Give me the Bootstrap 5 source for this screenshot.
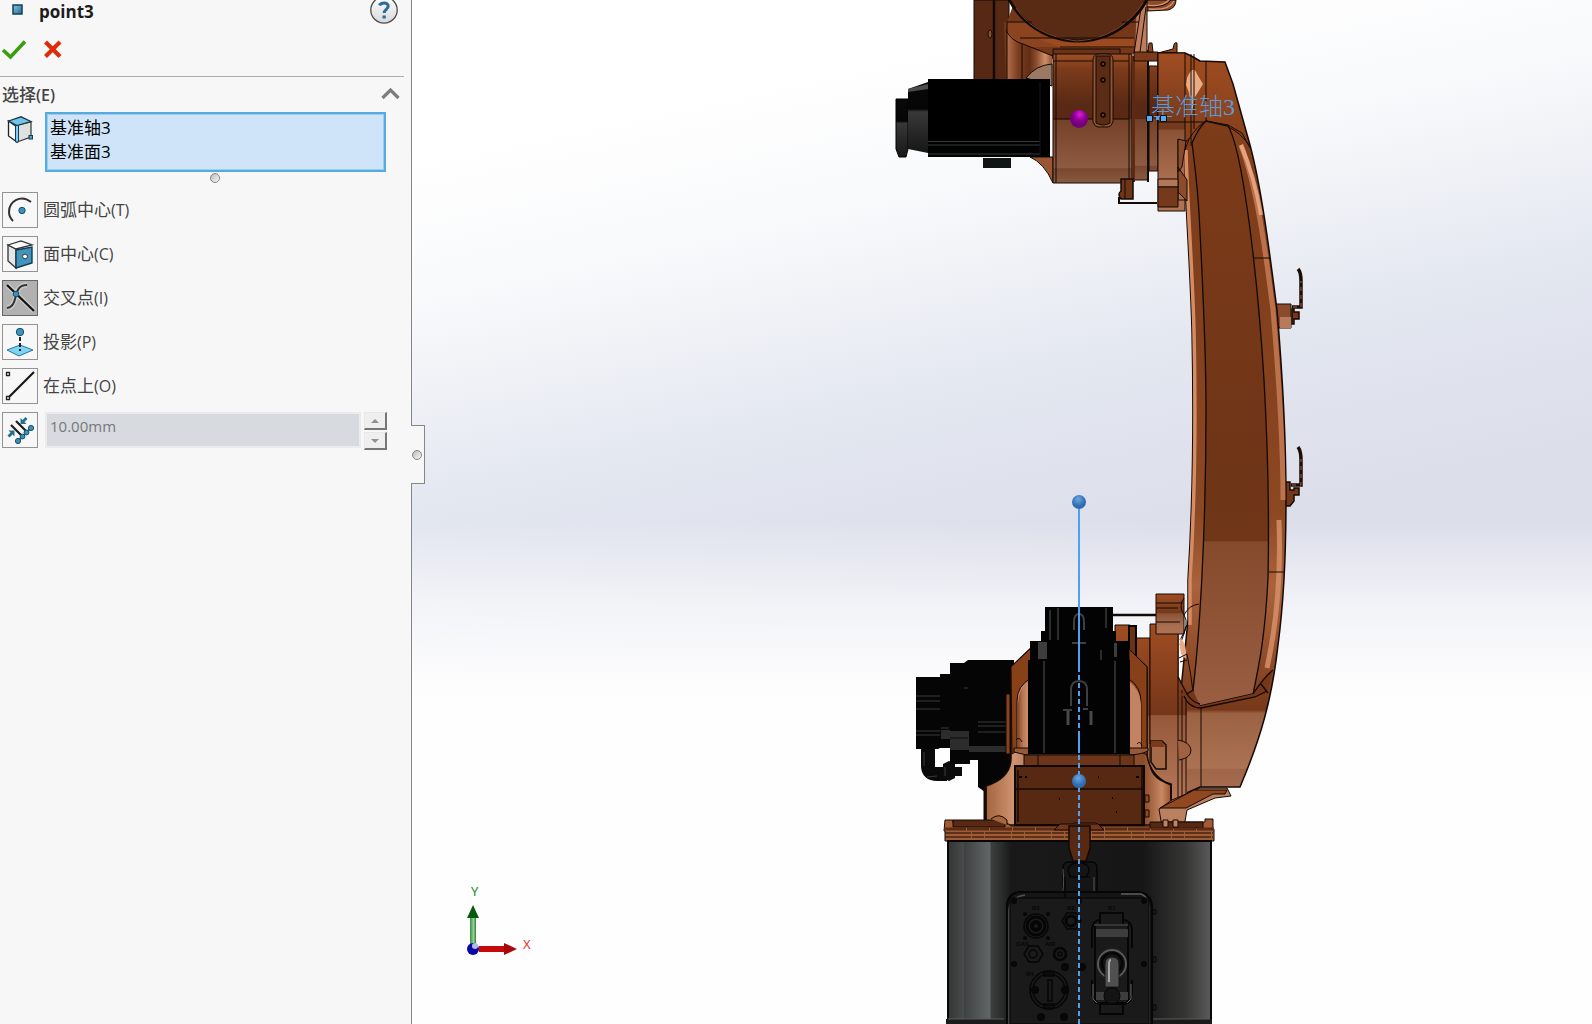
<!DOCTYPE html>
<html lang="zh-CN">
<head>
<meta charset="utf-8">
<meta name="viewport" content="width=device-width, initial-scale=1">
<title>point3</title>
<link href="https://cdn.jsdelivr.net/npm/bootstrap@5.3.0/dist/css/bootstrap.min.css" rel="stylesheet">
<style>
body{font-family:"Open Sans","Noto Sans CJK SC",sans-serif;font-size:17px;line-height:24px;color:#444}
.property-panel{width:412px;background:#f7f7f7;border-right:1px solid #868686}
.panel-head{height:30px;padding-left:12px;padding-right:13px}
.panel-title{font-size:17px;line-height:24px;font-weight:700;color:#1c1c1c}
.help-btn{margin-top:-5px}
.bare-btn{line-height:0}
.panel-actions{height:46px;gap:17px;padding-left:1px;padding-top:8px}
.panel-rule{height:1px;background:#acaeac;margin-right:7px}
.section-title{font-size:17px;line-height:24px;font-weight:500}
.latin{font-size:16px}
.section-title .latin{font-weight:600}
.section-head{padding:6px 11px 4px 2px;height:35px}
.pick-row{padding-left:7px;padding-right:25px;gap:12px}
.pick-list{height:60px;border:2px solid #55abe0;box-shadow:inset 0 0 0 1px #9fcdf0;background:#cfe4f8;color:#000;padding:0 3px;overflow:hidden;outline:0;font-size:17px}
.pick-list option{height:24px;line-height:24px;padding:0;min-height:24px}
.grip{width:10px;height:10px;border-radius:50%;border:1px solid #858585;background:linear-gradient(135deg,#b8b8b8,#fafafa)}
.list-grip{padding-left:19px;height:20px;padding-top:1px}
.options{padding-left:2px;gap:8px}
.option-label{gap:5px;cursor:pointer}
.icon-box{width:36px;height:36px;border:1px solid #939393;background:#f7f7f7}
.btn-check:checked+.option-label .icon-box{background:#b1b1b1;border-color:#666}
.dist-row{gap:7px;padding-right:24px}
.dist-input{height:36px;border:2px solid #ebebeb;background:#d7dbe0;color:#777;font-size:15px;line-height:20px;padding:0 0 8px 3px}
.spin{gap:2px;width:23px;margin-left:-4px}
.spin-btn{height:18px;border:1px solid #e8e8e8;border-right:2px solid #777;border-bottom:2px solid #777;background:#efefef;line-height:0}
.pane-handle{left:411px;top:425px;width:14px;height:59px;background:#f7f7f7;border:1px solid #868686;border-left:0;padding:0 2px 0 0;z-index:2}
.graphics{background:linear-gradient(to bottom,rgba(255,255,255,0) 51%,rgba(255,255,255,.62) 59%,rgba(254,254,254,1) 68%),linear-gradient(168deg,#fff 12%,#f8f9fb 24%,#e3e7f0 40%,#dcdeea 55%)}
.edge{fill:none;stroke:#140a05}
.dim{fill:none;stroke:#060606}
.sheen{fill:none;stroke:#383a3a}
.pl{font-family:"Liberation Sans",sans-serif;font-size:6px;font-weight:700;fill:#060606}
.axis-tag{font-family:"Liberation Serif","Noto Sans CJK SC",serif;font-size:24px;font-weight:300;fill:#5b9bdc}
.triad-tag{font-family:"Noto Sans","Open Sans",sans-serif;font-size:13px}
</style>
</head>
<body>
<div class="d-flex vh-100 overflow-hidden position-relative">
<aside class="property-panel flex-shrink-0">
  <header class="panel-head d-flex align-items-start">
    <svg width="11" height="11" class="mt-1" aria-hidden="true"><defs><linearGradient id="sq" x2="1" y2="1"><stop stop-color="#8cc6e2"/><stop offset="1" stop-color="#1f6b90"/></linearGradient></defs><rect x="1" y="1" width="9" height="9" fill="url(#sq)" stroke="#123f56" stroke-width="1.5"/></svg>
    <h1 class="panel-title mb-0 ms-3">point3</h1>
    <button type="button" class="btn p-0 border-0 bare-btn help-btn ms-auto" aria-label="帮助">
      <svg width="28" height="30" viewBox="0 0 28 30"><defs><linearGradient id="hp" x2="0" y2="1"><stop stop-color="#fff"/><stop offset="1" stop-color="#d8d8d8"/></linearGradient></defs><circle cx="14" cy="15" r="13.2" fill="url(#hp)" stroke="#4c4c4c" stroke-width="1.3"/><path d="M9.600 10.500c.8-3 8.600-4 8.600.6 0 3.200-4 3.300-4 7" fill="none" stroke="#276f96" stroke-width="3"/><rect x="12.500" y="20.500" width="3.300" height="3" fill="#276f96"/></svg>
    </button>
  </header>
  <div class="panel-actions d-flex align-items-start">
    <button type="button" class="btn p-0 border-0 bare-btn" aria-label="确定"><svg width="26" height="22"><path d="M2 12l7.500 7L24 3.500" fill="none" stroke="#38a00c" stroke-width="3.600"/></svg></button>
    <button type="button" class="btn p-0 border-0 bare-btn" aria-label="取消"><svg width="18" height="22"><path d="M1.500 4L16 18.500M16 4L1.500 18.500" stroke="#df2c08" stroke-width="4.200"/></svg></button>
  </div>
  <div class="panel-rule"></div>
  <section>
    <div class="section-head d-flex align-items-start justify-content-between">
      <h2 class="section-title mb-0" id="pick-title">选择<span class="latin">(E)</span></h2>
      <button type="button" class="btn p-0 border-0 bare-btn" aria-label="折叠"><svg width="19" height="17"><path d="M1.500 15L9.500 7l8 8" fill="none" stroke="#7d7d7d" stroke-width="3.200"/></svg></button>
    </div>
    <div class="pick-row d-flex align-items-start">
      <svg class="flex-shrink-0 mt-1" width="26" height="28" viewBox="0 0 26 28" aria-hidden="true"><path d="M1.500 5L10 11v15L1.500 20z" fill="#fafafa" stroke="#222" stroke-width="1.300"/><path d="M10 9l14-3v15L10 26z" fill="#e0e0e0" stroke="#333" stroke-width="1.200"/><path d="M1.500 5L14 .8 24 5.500 10 9.500z" fill="#72c4e8" stroke="#163b4d" stroke-width="1.300"/><path d="M8.500 9.500h3v16.500h-3z" fill="#7ed0f2" stroke="#123c50"/><rect x="22" y="19.500" width="3.500" height="3.500" fill="#4fa4cc" stroke="#123c50"/></svg>
      <select class="pick-list flex-grow-1 rounded-0" multiple size="2" aria-labelledby="pick-title"><option>基准轴3</option><option>基准面3</option></select>
    </div>
    <div class="list-grip d-flex justify-content-center"><span class="grip"></span></div>
    <div class="options d-flex flex-column align-items-start">
      <div><input class="btn-check" type="radio" name="mode" id="m1"><label class="option-label d-flex align-items-center" for="m1"><span class="icon-box"><svg width="34" height="34"><path d="M28 9C18 1 6 8 6 19c0 4 1 6 4 9" fill="none" stroke="#333" stroke-width="2"/><circle cx="19" cy="17.500" r="3.200" fill="#3e91ba" stroke="#17506d"/></svg></span><span>圆弧中心<span class="latin">(T)</span></span></label></div>
      <div><input class="btn-check" type="radio" name="mode" id="m2"><label class="option-label d-flex align-items-center" for="m2"><span class="icon-box"><svg width="34" height="34"><path d="M5 8l8 4v19l-8-7z" fill="#e6e6e6" stroke="#333" stroke-width="1.300"/><path d="M5 8l13-4 11 4-16 4z" fill="#fdfdfd" stroke="#333" stroke-width="1.300"/><path d="M13 13l16-3v16l-16 5z" fill="#4293bd" stroke="#123c50" stroke-width="1.400"/><circle cx="22" cy="19.500" r="2.400" fill="#fff" stroke="#333"/></svg></span><span>面中心<span class="latin">(C)</span></span></label></div>
      <div><input class="btn-check" type="radio" name="mode" id="m3" checked><label class="option-label d-flex align-items-center" for="m3"><span class="icon-box"><svg width="34" height="34"><path d="M24 4C8 4 17 25 4 27M4 4l27 26" fill="none" stroke="#ddd" stroke-width="5" opacity=".6"/><path d="M24 4C8 4 17 25 4 27" fill="none" stroke="#333" stroke-width="2"/><path d="M4 4l27 26" stroke="#151515" stroke-width="2.400"/><circle cx="13" cy="13" r="2.800" fill="#3e91ba" stroke="#17506d"/></svg></span><span>交叉点<span class="latin">(I)</span></span></label></div>
      <div><input class="btn-check" type="radio" name="mode" id="m4"><label class="option-label d-flex align-items-center" for="m4"><span class="icon-box"><svg width="34" height="34"><path d="M4 25l13-5 13 5-14 6z" fill="#7ed4f5" stroke="#28769a"/><path d="M17 12v14" stroke="#222" stroke-width="2" stroke-dasharray="4 2"/><circle cx="17" cy="7" r="3.700" fill="#3e91ba" stroke="#17506d"/></svg></span><span>投影<span class="latin">(P)</span></span></label></div>
      <div><input class="btn-check" type="radio" name="mode" id="m5"><label class="option-label d-flex align-items-center" for="m5"><span class="icon-box"><svg width="34" height="34"><path d="M6 28L31 3" stroke="#151515" stroke-width="2.200"/><path d="M3.500 3.500h3v3h-3zM3.500 27.500h3v3h-3z" fill="#fff" stroke="#222" stroke-width="1.300"/></svg></span><span>在点上<span class="latin">(O)</span></span></label></div>
      <div class="dist-row d-flex align-items-start align-self-stretch">
        <label class="icon-box flex-shrink-0" for="dist" aria-label="距离"><svg width="34" height="34"><path d="M8 12l12 12M13 8l11 11" stroke="#1d1d1d" stroke-width="2.200"/><path d="M15 28L28 15" stroke="#1d5a78" stroke-width="2"/><g fill="#3e8eb6" stroke="#17506d"><circle cx="15" cy="28" r="2.600"/><circle cx="19.500" cy="23.500" r="2.400"/><circle cx="23.500" cy="19.500" r="2.400"/><circle cx="28" cy="15" r="2.600"/></g><path d="M11.500 17.500v6l-2-2-3 3-2-2 3-3-2-2zM17.500 11V5l2 2 3-3 2 2-3 3 2 2z" fill="#20708f"/></svg></label>
        <input class="dist-input flex-grow-1 rounded-0" id="dist" type="text" value="10.00mm" disabled>
        <div class="spin d-flex flex-column">
          <button type="button" class="spin-btn p-0" aria-label="增加"><svg width="10" height="6"><path d="M1 5l4-4 4 4z" fill="#909090"/></svg></button>
          <button type="button" class="spin-btn p-0" aria-label="减少"><svg width="10" height="6"><path d="M1 1l4 4 4-4z" fill="#909090"/></svg></button>
        </div>
      </div>
    </div>
  </section>
</aside>
<button type="button" class="pane-handle position-absolute d-flex align-items-center justify-content-center" aria-label="收起面板"><span class="grip"></span></button>
<main class="graphics flex-grow-1 overflow-hidden">
<svg class="d-block w-100 h-100" viewBox="412 0 1180 1024" preserveAspectRatio="xMinYMin slice" role="img" aria-label="机器人模型">
<defs>
<linearGradient id="cyl" x2="0" y2="1"><stop stop-color="#a04f24"/><stop offset=".12" stop-color="#7b3b1b"/><stop offset=".4" stop-color="#582914"/><stop offset=".5" stop-color="#582914"/><stop offset=".51" stop-color="#764129"/><stop offset=".88" stop-color="#8d5b42"/><stop offset=".89" stop-color="#79482f"/><stop offset="1" stop-color="#895941"/></linearGradient>
<linearGradient id="fl" x2="0" y2="1"><stop stop-color="#a24e22"/><stop offset=".48" stop-color="#73381b"/><stop offset=".49" stop-color="#8b5235"/><stop offset=".8" stop-color="#aa6f50"/><stop offset="1" stop-color="#b07353"/></linearGradient>
<linearGradient id="bend" x2="1" y2="0"><stop stop-color="#b36f4c"/><stop offset=".25" stop-color="#7a3d1e"/><stop offset=".5" stop-color="#632e15"/><stop offset=".65" stop-color="#8a4d2d"/><stop offset=".85" stop-color="#cd8d69"/><stop offset="1" stop-color="#95573a"/></linearGradient>
<linearGradient id="armL" gradientUnits="userSpaceOnUse" x1="0" y1="60" x2="0" y2="790"><stop stop-color="#9d4b20"/><stop offset=".15" stop-color="#7d3d1b"/><stop offset=".4" stop-color="#84411d"/><stop offset=".62" stop-color="#8c4823"/><stop offset=".72" stop-color="#a9623c"/><stop offset=".84" stop-color="#8a4725"/><stop offset=".89" stop-color="#763819"/><stop offset=".895" stop-color="#9b6143"/><stop offset=".97" stop-color="#ac7254"/><stop offset=".972" stop-color="#9e6548"/><stop offset="1" stop-color="#a76d50"/></linearGradient>
<linearGradient id="face" gradientUnits="userSpaceOnUse" x1="0" y1="120" x2="0" y2="706"><stop stop-color="#7c3b19"/><stop offset=".6" stop-color="#6f3517"/><stop offset=".718" stop-color="#6f3618"/><stop offset=".72" stop-color="#854a2b"/><stop offset="1" stop-color="#9a5f43"/></linearGradient>
<linearGradient id="bar"><stop stop-color="#333535"/><stop offset=".06" stop-color="#4a4c4c"/><stop offset=".062" stop-color="#3e4242"/><stop offset=".16" stop-color="#626666"/><stop offset=".163" stop-color="#3e4040"/><stop offset=".24" stop-color="#191919"/><stop offset=".74" stop-color="#161616"/><stop offset=".9" stop-color="#353534"/><stop offset="1" stop-color="#5a5a5a"/></linearGradient>
<linearGradient id="base"><stop stop-color="#a3643f"/><stop offset=".15" stop-color="#cf9371"/><stop offset=".3" stop-color="#a3694b"/><stop offset=".7" stop-color="#8c4f30"/><stop offset=".85" stop-color="#8a4b2b"/><stop offset=".95" stop-color="#c98863"/><stop offset="1" stop-color="#9a5531"/></linearGradient>
<linearGradient id="low" x2="0" y2="1"><stop stop-color="#a04d22"/><stop offset=".5" stop-color="#75371a"/><stop offset=".51" stop-color="#75371a"/><stop offset=".515" stop-color="#95583a"/><stop offset="1" stop-color="#b67859"/></linearGradient>
<linearGradient id="cap" x2="0" y2="1"><stop stop-color="#0a0a0a"/><stop offset=".38" stop-color="#050505"/><stop offset=".42" stop-color="#383838"/><stop offset="1" stop-color="#161616"/></linearGradient>
<linearGradient id="pane"><stop stop-color="#8a4a2a"/><stop offset=".5" stop-color="#bd7b58"/><stop offset="1" stop-color="#cf9472"/></linearGradient>
<radialGradient id="pur" cx=".55" cy=".25"><stop stop-color="#d81fd8"/><stop offset=".6" stop-color="#9a009a"/><stop offset="1" stop-color="#72007a"/></radialGradient>
<radialGradient id="blu" cx=".45" cy=".3"><stop stop-color="#6ba6e2"/><stop offset="1" stop-color="#2f6db0"/></radialGradient>
<linearGradient id="grn"><stop stop-color="#3c8d42"/><stop offset=".6" stop-color="#8ed597"/><stop offset="1" stop-color="#2d7a33"/></linearGradient>
</defs>

<!-- upper housing -->
<path d="M974 0h35v80h-35z" fill="#572914" stroke="#140a05"/><path d="M994 0v80" class="edge" stroke-width="2.500"/><ellipse cx="990" cy="34" rx="2" ry="4" fill="#8a5034" stroke="#140a05"/>
<path d="M1145 0h31q0 8-8 10l-21 1z" fill="#8d4b2a" stroke="#140a05"/><path d="M1146 5q15 3 23-5M1149 9q20 2 25-8" fill="none" stroke="#d7936f" stroke-width="1.500"/><path d="M1147 7q18 1 24-7" class="edge"/>
<path d="M1004 22h3l8-22h132v53l-95 6v25h-46z" fill="#753719"/>
<path d="M1007 22h30l20 17h77l-1 8h-109q-14-5-17-20z" fill="#8b4320"/>
<path d="M1036 38h98v10h-72z" fill="#9c4a20"/><path d="M1137 0h10v52h-12z" fill="#bd7d5c"/>
<path d="M1007 30q4 9 16 14l29 12v24h-45z" fill="url(#bend)"/>
<circle cx="1078" cy="-37" r="78" fill="#592a14" stroke="#100804" stroke-width="3"/><path d="M1016 8q18 28 61 33q43-3 66-38" stroke="#7d4429" fill="none"/>
<path d="M1007 22h25M1122 22h17M1020 38h114M1022 44v36M1007 22v58M1147 0v53M1006 30q5 11 17 14l30 12M1141 8l-7 45M1146 7l-6 45M1060 47h74" class="edge"/>
<path d="M1026 78q10-13 26-14v22z" fill="#9b7861" stroke="#140a05"/><path d="M1030 157q14 6 23 26v-26z" fill="#9a5633" stroke="#140a05"/>
<path d="M1053 49h67v6h-67z" fill="#693319" stroke="#140a05"/>
<path d="M1053 54h79v129h-79z" fill="url(#cyl)"/><path d="M1053 54h79v129h-79zM1053 61h76M1053 119h76M1056 54v129M1129 54v129" class="edge"/>
<path d="M1134 57h14v123h-14zM1149 66h9v105h-9z" fill="url(#cyl)" stroke="#140a05"/><path d="M1132 56h3v126h-3z" fill="#5a2b15"/><path d="M1148 50v132" class="edge" stroke-width="2"/><path d="M1134 52h24v9h-24z" fill="#7b3a1a" stroke="#140a05"/>
<path d="M1158 53l15-4q1-8 4-6v10zM1149 43h3l1 9h-5z" fill="#8f4723" stroke="#140a05"/>
<path d="M1093 60q0-6 6-6h8q6 0 6 6v62q-2 5-5 5h-10q-3 0-5-5z" fill="#925332" stroke="#140a05"/><path d="M1096 56h14v67q-7 4-14 0z" fill="#5a2b15" stroke="#140a05"/>
<g fill="#6f371c" stroke="#080402" stroke-width="1.500"><circle cx="1103" cy="64" r="2"/><circle cx="1103" cy="80" r="2"/><circle cx="1103" cy="115" r="2"/></g>
<path d="M1121 179h12v20h-12q-4-5 0-8z" fill="#6e3518" stroke="#140a05" stroke-width="1.500"/><path d="M1125 180v19" class="edge"/><path d="M1119 197v6h38" class="edge" stroke-width="2"/>

<!-- upper motor -->
<path d="M896 99h12v50l-2 8h-7l-3-8z" fill="url(#cap)" stroke="#000"/><path d="M908 89l20-7v71l-20-4z" fill="url(#cap)"/><path d="M908 89l20-5v5l-20 3z" fill="#4c4c4c"/>
<path d="M928 79h122v78H928z" fill="#000"/><path d="M928 141.500h112M928 145h112M928 154h112" class="sheen"/><path d="M1040 82v75" stroke="#161616"/><path d="M983 158h28v10h-28z" fill="#101414"/>

<!-- sensor hooks -->
<path d="M1276 304h15v24h-13z" fill="#8a4a2b" stroke="#140a05"/><path d="M1280 317h11v11h-11z" fill="#b77b5c"/><path d="M1292 309h2v3h5v7h-5v5h-2zM1285 482h5v8h4v-2h5v7h-5v6l-4 5h-5z" fill="#75371a" stroke="#140a05" stroke-width="1.500"/>
<path d="M1292 307h9v-26q0-9-3-12M1291 485h10v-25q0-9-3-13" fill="none" stroke="#1c0d07" stroke-width="3.500"/><path d="M1293 307h8v-26M1292 485h9v-26" fill="none" stroke="#a26342" stroke-dasharray="4 4"/>

<!-- main arm -->
<path d="M1158 53h27q7 3 15 8l25 1 8 22 17 61C1262 190 1270 256 1277 310C1283 380 1286 440 1286 500C1286 560 1284 600 1278 645C1272 700 1260 740 1240 787h-40l-27 12q-6-10 3-60L1188 620V580C1193 500 1194 420 1192 330C1190 260 1185 200 1184 150l-26 1z" fill="url(#armL)" stroke="#140a05" stroke-width="1.500"/>
<path d="M1158 53h27v158h-27z" fill="url(#fl)" stroke="#140a05"/>
<path d="M1187 78q6-14 10-4l6 10-8 13-4 20q1-20-5-32z" fill="#ffc6a1" opacity=".8"/><path d="M1158 122h50M1194 54v75M1206 62v59M1191 54v92" class="edge"/>
<path d="M1241 145C1258 190 1266 256 1273 310C1279 380 1283 440 1283 500" fill="none" stroke="#c97e58" stroke-width="5" opacity=".8"/>
<path d="M1241 145Q1255 178 1261 215" fill="none" stroke="#f0b08c" stroke-width="4" opacity=".8"/>
<path d="M1279 520Q1282 600 1267 668" fill="none" stroke="#d9936d" stroke-width="5" opacity=".8"/>
<path d="M1186 150C1187 200 1192 260 1194 330C1196 420 1195 500 1190 580V625" fill="none" stroke="#d58b63" stroke-width="3.500"/>
<path d="M1206 121l22 5C1243 150 1258 280 1264 380C1268 450 1269 530 1268 578C1265 640 1258 670 1253 694L1200 706Q1193 698 1193 690C1199 640 1206 540 1206 410C1206 340 1202 270 1199 213C1197 180 1194 160 1192 143Q1199 127 1206 121z" fill="url(#face)" stroke="#100804" stroke-width="1.300"/>
<path d="M1178 147l11-8q9-14 17-18l22 4 14 8 8 15M1185 150l4-11M1254 258h16M1269 572h16M1228 127q12 5 21 18M1178 140v60h7" class="edge"/>
<path d="M1178 139l8 2-4 26-4 5zM1178 167l9 13v21l-9-9z" fill="#8a4c2b" stroke="#140a05"/>
<path d="M1158 179h20v8h-20z" fill="#b37858" stroke="#140a05"/><path d="M1158 187h20v20h-20z" fill="#75391b" stroke="#140a05"/>

<!-- lower shoulder -->
<path d="M1113 615h44" class="edge" stroke-width="2.500"/>
<path d="M1115 625h15v13h20v165h-35z" fill="url(#low)" stroke="#140a05"/><path d="M1129 626h7v30h-7z" fill="#6b3217" stroke="#000" stroke-width="2"/>
<path d="M1150 624h29v53l8 17v107l-17 1-20-16z" fill="url(#low)"/><path d="M1150 624v120M1178 594v205M1182 690v110M1186 700v96M1201 706v81M1150 624h28" class="edge"/>
<path d="M1156 594h28v40h-28z" fill="url(#fl)" stroke="#140a05"/><path d="M1156 603h27M1156 608h22M1156 622h24M1184 615q5-10 15-11M1180 645l7-20M1184 598q-6 8 0 17t-4 25" class="edge"/>
<path d="M1180 638q7 5 6 20-7 0-6-20z" fill="#e9aa86"/><path d="M1179 658l8-4M1180 662l7-2M1187 654q4 20 6 38" class="edge"/>
<path d="M1193 690l7 16 53-12 14-20 6-3-6 22-14 5-53 10-12-6-8-8z" fill="#753719"/>
<path d="M1178 677l9 17 6-4M1184 696q5 12 17 12l54-11 12-6M1187 694q5 8 13 10M1253 694q11-17 20-24M1261 684l7 9" class="edge" stroke-width="1.300"/>
<path d="M1178 740q12 2 13 10 0 8-12 10" fill="#9f613f" stroke="#140a05"/><path d="M1151 741h11l4 4v24h-10l-5-7z" fill="#a76a49" stroke="#140a05" stroke-width="1.500"/><path d="M1151 741h11l3 6h-14z" fill="#7b3a1b"/>

<!-- left motor -->
<path d="M916 677h24v-3h10v-11h14l4-3h46v140h-18l-18-13v-27h-8v4h-20v-16h-10l-2 1h-22z" fill="#050505"/><path d="M978 760h34v10q-5 13-25 15l-9 2z" fill="#050505"/>
<path d="M916 696h24M916 701h24M916 709h24M916 731h24M916 735h24M941 728h8M941 738h8M978 722h28M978 726h28M978 732h28M964 688h4" class="sheen"/><path d="M950 731h19v19h-19zM941 730h9v9h-9zM969 746h37v6h-37z" fill="#2c2c2c"/><path d="M950 738h18M953 760h14" stroke="#080808"/>
<path d="M928 749v17q0 8 9 8h10" fill="none" stroke="#090909" stroke-width="14"/><path d="M943 764l6-3 6 3v14l-6 3-6-3zM954 767h8v9h-8z" fill="#0c0c0c"/><path d="M924 752v14M927 777l10-1M945 767v9" class="sheen"/>

<!-- pedestal and centre motor -->
<path d="M1011 667l20-19h96l20 19v88q3 21 24 30v40H986v-39q25-8 25-28z" fill="url(#base)" stroke="#140a05" stroke-width="1.500"/>
<path d="M1011 667l20-19v30q-14 8-14 23v50l-5 3zM1147 667l-18-18v30q12 8 12 23v50l6 3z" fill="#884019" stroke="#140a05"/>
<path d="M1029 682q-11 8-11 22v46h11z" fill="url(#pane)"/><path d="M1130 682q10 8 11 22v46h-11z" fill="#c38261"/>
<path d="M1006 694h4v60h-4z" fill="#874321" stroke="#140a05"/>
<path d="M1014 752q12 4 22 3h90q14 0 22-4v-3h-134z" fill="#97593a" stroke="#140a05"/><path d="M1024 755h110v11h-110z" fill="#6d3519" stroke="#140a05"/><path d="M1038 755v11M1120 755v11M1016 740q3-4 6 2M1137 744q3-4 5 2" class="edge"/>
<path d="M1045 607h68v24h3v10h13v19h1v94h-102v-94h2v-19h11v-10h4z" fill="#030303"/>
<path d="M1044 661v92M1115 661v92M1050 610v30M1058 608v32M1106 608v20M1101 650v10" class="sheen" stroke-width="1.500"/><path d="M1038 642h9v17h-9zM1114 643h3v14h-3z" fill="#3d3d3d"/>
<path d="M1071 706v-16q0-9 8-9t8 9v16M1063 710h9M1083 709h5M1074 630v-8q0-8 5-8t5 8v8M1072 643h14" fill="none" stroke="#3f3f3f" stroke-width="2"/><path d="M1068 711v14M1091 711v14" stroke="#484848" stroke-width="3"/>
<path d="M1015 766h129v59h-129z" fill="#582912" stroke="#100804" stroke-width="2"/><path d="M1015 789h129M1018 770v52M1142 766v58" class="edge" stroke-width="1.500"/><path d="M1019 777h3M1025 777h2M1136 777h3M1059 799h1M1112 798h1M1116 812h1M1098 777h1" stroke="#000" stroke-width="2"/>
<path d="M985 786v38" class="edge" stroke-width="3"/><path d="M1145 795h4v7h-4zM1145 810h4v7h-4z" fill="#8a4a28" stroke="#140a05"/><path d="M1150 765q3 15 21 19v16" class="edge" stroke-width="1.500"/>

<!-- release lever -->
<path d="M1172 800l28-12h27l4 8-16 2-28 12-3 17h-22l-3-18z" fill="#ba8060" stroke="#140a05"/><path d="M1160 808l34-18h33l-2 4h-12l-27 14z" fill="#914720" stroke="#140a05"/>

<!-- base flange -->
<path d="M945 820h8v3h54l4 3h60l3-3h22l3 3h60l2-4h44v-3h8v10h1v12H945v-10h-1z" fill="#a35b34" stroke="#140a05"/>
<path d="M953 820h52v7h-52zM1150 822h53v6h-53z" fill="#572914" stroke="#140a05"/><path d="M944 829h270" stroke="#5b2c16" stroke-width="3" stroke-dasharray="22 1"/><path d="M945 833h268M945 837h268" stroke="#140a05" stroke-dasharray="26 1 12 1"/><path d="M991 819q8-7 16 1v5" fill="#a8663f" stroke="#140a05"/><path d="M1163 820h5v7h-5zM1173 820h5v7h-5z" fill="#c28562" stroke="#140a05"/>

<!-- base barrel -->
<path d="M948 841h263v179q-130 8-263 0z" fill="url(#bar)" stroke="#070707" stroke-width="2"/><path d="M946 1019h60v5h-60zM1150 1019h62v5h-62z" fill="#1b1b1b"/><path d="M948 1019h56M1153 1019h57" stroke="#5b5b5b"/>
<path d="M1063 897v-29q0-6 6-6h22q6 0 6 6v29" fill="#151515" stroke="#050505" stroke-width="1.500"/><path d="M1061 895q4-4 2-26M1094 877v20" fill="none" stroke="#555"/>
<path d="M1007 1024v-117q0-14 13-15h118q14 1 14 16v116z" fill="#151515" stroke="#060606" stroke-width="2"/><path d="M1009 1024v-114q1-13 16-15" fill="none" stroke="#505050" stroke-width="1.500"/><path d="M1121 894h20q8 3 8 13v117" fill="none" stroke="#5d5d5d" stroke-width="1.500"/>
<path d="M1010 898h139v126h-139z" fill="#1a1a1a" stroke="#050505"/>
<path d="M1060 824h38l6 6h-50z" fill="#70371c" stroke="#140a05"/><path d="M1069 826h21v22l-4 13h-13l-4-13z" fill="#582912" stroke="#140a05" stroke-width="1.500"/>
<path d="M1069 877h20M1065 877v20M1068 872q0-9 11-9t10 9l-3 5h-15z" class="dim" stroke-width="1.500"/>
<g class="dim" stroke-width="1.500"><circle cx="1036" cy="926" r="12"/><circle cx="1036" cy="926" r="9" stroke-width="3"/><circle cx="1036" cy="926" r="4" stroke-width="4"/><path d="M1062 921l5-8h9l5 8-5 8h-9zM1024 954l5-8h9l5 8-5 8h-9z"/><circle cx="1071" cy="921" r="5" stroke-width="3"/><circle cx="1033" cy="954" r="4"/><circle cx="1060" cy="954" r="6" stroke-width="2.500"/><circle cx="1060" cy="954" r="2"/><circle cx="1049" cy="990" r="19"/><circle cx="1049" cy="990" r="16"/><path d="M1048 980h4v21h-4zM1044 972h10v4h-10zM1044 1004h10v4h-10z"/></g>
<g fill="#070707"><circle cx="1014" cy="901" r="3"/><circle cx="1079" cy="901" r="3"/><circle cx="1144" cy="901" r="3"/><circle cx="1014" cy="964" r="3"/><circle cx="1144" cy="964" r="3"/><circle cx="1082" cy="967" r="4"/><circle cx="1065" cy="967" r="4"/><circle cx="1035" cy="990" r="4"/><circle cx="1065" cy="990" r="4"/><circle cx="1041" cy="1017" r="4"/><circle cx="1064" cy="1017" r="4"/><circle cx="1025" cy="914" r="2"/><circle cx="1048" cy="914" r="2"/><circle cx="1025" cy="938" r="2"/><circle cx="1048" cy="938" r="2"/></g>
<text class="pl" x="1032" y="910">R3</text><text class="pl" x="1067" y="910">R2</text><text class="pl" x="1108" y="910">R1</text><text class="pl" x="1016" y="946">GAS</text><text class="pl" x="1045" y="946">AIR</text><text class="pl" x="1026" y="976">R4</text>
<g class="dim" stroke-width="2"><path d="M1100 913h23v12h-23zM1100 1004h23v10h-23zM1095 925h33v78h-33z"/><path d="M1100 920q-6 0-8 8v20M1123 920q7 0 9 8v20M1092 980v15q2 8 8 9M1132 980v15q-2 8-9 9"/></g>
<path d="M1096 929h32v8h-32zM1096 992h32v8h-32z" fill="#3d3d3d"/><path d="M1094 925h34M1093 984v15l4 4M1131 984v15l-4 4" fill="none" stroke="#666"/><circle cx="1112" cy="964" r="14" fill="#101010" stroke="#595959" stroke-width="2"/><circle cx="1112" cy="963" r="10" fill="#151515" stroke="#050505" stroke-width="2"/>
<path d="M1105 987v-23q0-7 7-7t7 7v23z" fill="#505050" stroke="#161616"/><path d="M1109 982v-18q0-4 2-4" fill="none" stroke="#a5a5a5" stroke-width="2"/><circle cx="1112" cy="996" r="8" fill="#141414" stroke="#050505"/>
<path d="M1153 910h3v4h-3zM1153 957h3v5h-3zM1153 1005h3v5h-3z" class="dim"/>

<!-- reference axes -->
<path d="M1079 505v162M1079 733v20" stroke="#4f9ff5" stroke-width="2"/><path d="M1079 667v357" stroke="#4f9ff5" stroke-width="2" stroke-dasharray="5 3"/><circle cx="1079" cy="502" r="7" fill="url(#blu)"/><circle cx="1079" cy="781" r="7" fill="url(#blu)"/><circle cx="1079" cy="119" r="9" fill="url(#pur)"/>
<text class="axis-tag" x="1151" y="115">基准轴3</text><path d="M1146.500 115.500h6v6h-6zM1160.500 115.500h6v6h-6z" fill="#5baaf6" stroke="#111"/><path d="M1156 117h3v3h-3z" fill="#4aa0f5"/>

<!-- triad -->
<path d="M470 916h6v29h-6z" fill="url(#grn)"/><path d="M467 918l6-13 6 13z" fill="#075c0c"/><path d="M479 946h26v6h-26z" fill="#c40a0a"/><path d="M504 943l13 6-13 6z" fill="#a80808"/><circle cx="473" cy="949" r="6" fill="#0808a8"/><circle cx="475" cy="946" r="3" fill="#b8b8e8"/>
<text class="triad-tag" x="471" y="896" fill="#1c8a2a">Y</text><text class="triad-tag" x="523" y="949" fill="#e83232">X</text>
</svg>
</main>
</div>
<script src="https://cdn.jsdelivr.net/npm/bootstrap@5.3.0/dist/js/bootstrap.bundle.min.js"></script>
</body>
</html>
